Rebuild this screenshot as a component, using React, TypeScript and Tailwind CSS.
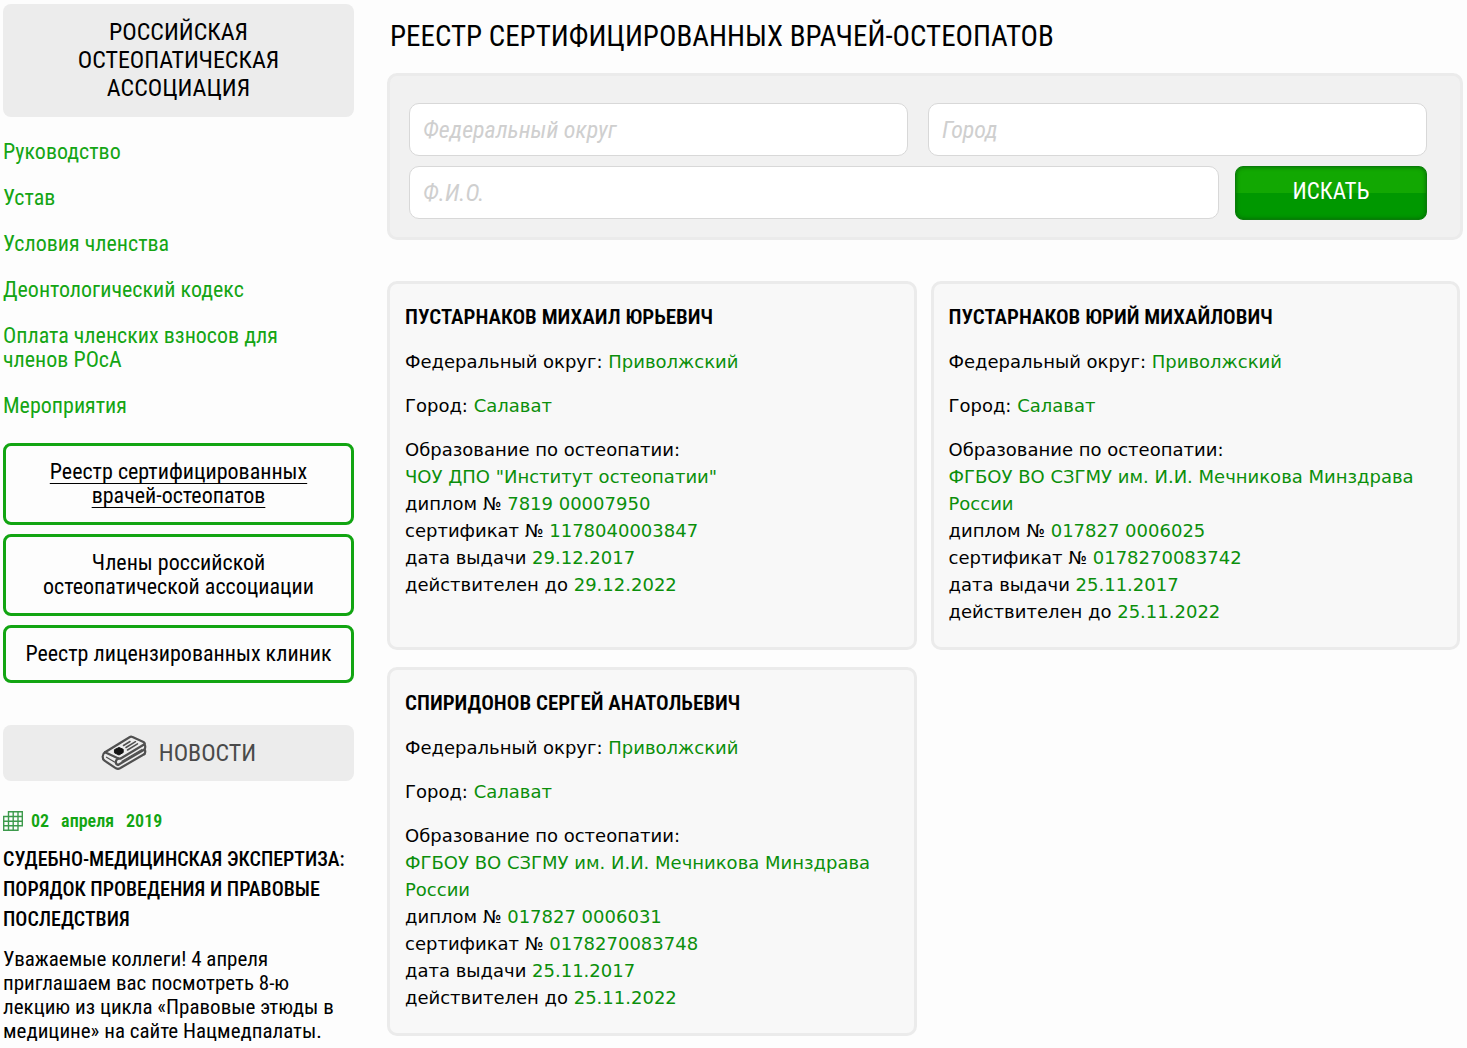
interface Doctor {
  name: string;
  district: string;
  city: string;
  school: string;
  diploma: string;
  certificate: string;
  issued: string;
  validUntil: string;
}

const menuLinks = [
  'Руководство',
  'Устав',
  'Условия членства',
  'Деонтологический кодекс',
  'Оплата членских взносов для членов РОсА',
  'Мероприятия',
];

const registryLinks = [
  { label: 'Реестр сертифицированных врачей-остеопатов', active: true },
  { label: 'Члены российской остеопатической ассоциации', active: false },
  { label: 'Реестр лицензированных клиник', active: false },
];

const doctors: Doctor[] = [
  {
    name: 'Пустарнаков Михаил Юрьевич',
    district: 'Приволжский',
    city: 'Салават',
    school: 'ЧОУ ДПО "Институт остеопатии"',
    diploma: '7819 00007950',
    certificate: '1178040003847',
    issued: '29.12.2017',
    validUntil: '29.12.2022',
  },
  {
    name: 'Пустарнаков Юрий Михайлович',
    district: 'Приволжский',
    city: 'Салават',
    school: 'ФГБОУ ВО СЗГМУ им. И.И. Мечникова Минздрава России',
    diploma: '017827 0006025',
    certificate: '0178270083742',
    issued: '25.11.2017',
    validUntil: '25.11.2022',
  },
  {
    name: 'Спиридонов Сергей Анатольевич',
    district: 'Приволжский',
    city: 'Салават',
    school: 'ФГБОУ ВО СЗГМУ им. И.И. Мечникова Минздрава России',
    diploma: '017827 0006031',
    certificate: '0178270083748',
    issued: '25.11.2017',
    validUntil: '25.11.2022',
  },
];

function NewspaperIcon() {
  return (
    <svg viewBox="0 0 46 36" className="h-9 w-[46px]" fill="none" stroke="#505050" strokeWidth="2.2" strokeLinejoin="round" strokeLinecap="round" aria-hidden="true">
      <path d="M17.500 23.500 4 17.200 28.500 2.200q1.500-.9 3-.1L43 7.300q1.500 1 0 2.200L20.500 23q-1.500 1-3 .5Z" />
      <path d="M4 17.200C1 19 1 24 3.500 25.700L15 33.300q2 1 4 0L43.500 19" />
      <path d="M17.500 23.500c-3.500 1.500-3.500 5.500-.5 6.500L43.500 14.500" />
      <path d="M43.500 9q1.500 2.800 0 5.500M43.500 14.500q1.500 2 0 4.500" />
      <path d="m5.500 22.200 8 4.800M21 26.300l20-11.800" strokeWidth="1.200" />
      <path d="M13.800 14.500 18 12.500l4.200 1.800v3.200L18 20l-4.200-2Z" fill="#151515" stroke="#151515" strokeWidth="1" />
      <path d="m22.500 10.500 6.500-4M25 12.500l9.500-5.800M26.500 15l10-6.200" strokeWidth="1.500" />
    </svg>
  );
}

function CalendarIcon() {
  return (
    <svg viewBox="0 0 20 20" className="h-5 w-5" fill="none" stroke="#3d9a4c" strokeWidth="1.400" aria-hidden="true">
      <path d="M5.500.7h13.800v14H15v4.600H.7V5.500h4.800V.7Z" />
      <path d="M10.200.7v18.600M15 .7v14M5.500 5.500v13.800M.7 10.200h18.600M5.500 5.500h13.800M.7 14.700H15" />
    </svg>
  );
}

function Value({ children }: { children: string }) {
  return <span className="text-[#0b8f0b]">{children}</span>;
}

function DoctorCard({ doctor }: { doctor: Doctor }) {
  return (
    <article className="flex flex-col gap-[17px] rounded-[10px] border-3 border-[#ebebeb] bg-[#f8f8f8] px-[15px] pt-5 pb-[22px] font-['DejaVu_Sans',sans-serif] text-lg leading-[27px]">
      <h2 className="font-['Roboto_Condensed',Roboto,sans-serif] text-[21px] leading-[27px] font-semibold uppercase">
        {doctor.name}
      </h2>
      <p>
        Федеральный округ: <Value>{doctor.district}</Value>
      </p>
      <p>
        Город: <Value>{doctor.city}</Value>
      </p>
      <p>
        Образование по остеопатии:
        <br />
        <Value>{doctor.school}</Value>
        <br />
        диплом № <Value>{doctor.diploma}</Value>
        <br />
        сертификат № <Value>{doctor.certificate}</Value>
        <br />
        дата выдачи <Value>{doctor.issued}</Value>
        <br />
        действителен до <Value>{doctor.validUntil}</Value>
      </p>
    </article>
  );
}

function SearchInput({ label, name }: { label: string; name: string }) {
  return (
    <input
      type="text"
      name={name}
      aria-label={label}
      placeholder={label}
      className="h-[53px] min-w-0 flex-1 rounded-[10px] border border-[#d8d8d8] bg-white px-[13px] text-2xl placeholder:text-[#cfcfcf] placeholder:italic"
    />
  );
}

function SearchForm() {
  return (
    <form
      className="flex flex-col gap-[10px] rounded-[10px] border-3 border-[#ebebeb] bg-[#f1f1f1] pt-[27px] pr-[33px] pb-[17px] pl-[19px]"
      onSubmit={(e) => e.preventDefault()}
    >
      <div className="flex gap-5">
        <SearchInput label="Федеральный округ" name="district" />
        <SearchInput label="Город" name="city" />
      </div>
      <div className="flex gap-4">
        <SearchInput label="Ф.И.О." name="fullName" />
        <button
          type="submit"
          className="h-[54px] w-48 rounded-lg border border-[#0a7d0a] bg-linear-to-b from-[#12a802] from-50% to-[#009800] to-50% pb-0.5 text-[23px] text-white uppercase shadow-[inset_0_0_4px_#066606]"
        >
          Искать
        </button>
      </div>
    </form>
  );
}

function Sidebar() {
  return (
    <aside className="w-[351px] shrink-0">
      <h2 className="rounded-lg bg-[#ececec] px-16 pt-[14px] pb-[15px] text-center text-2xl leading-7 uppercase">
        Российская остеопатическая ассоциация
      </h2>

      <nav className="mt-[23px]">
        <ul className="flex flex-col gap-[22px] text-[22px] leading-6 text-[#14a514]">
          {menuLinks.map((label) => (
            <li key={label} className="pr-14">
              <a href="#">{label}</a>
            </li>
          ))}
        </ul>
        <ul className="mt-[25px] flex flex-col gap-[9px] text-center text-[22px] leading-6">
          {registryLinks.map(({ label, active }) => (
            <li key={label}>
              <a
                href="#"
                className={`block rounded-lg border-3 border-[#12a512] px-3 py-[14px] ${active ? 'underline decoration-1 underline-offset-4' : ''}`}
              >
                {label}
              </a>
            </li>
          ))}
        </ul>
      </nav>

      <section>
        <h2 className="mt-[42px] flex h-14 items-center justify-center gap-3 rounded-lg bg-[#ececec] text-2xl text-[#4a4a4a] uppercase">
          <NewspaperIcon />
          Новости
        </h2>
        <article className="mt-7">
          <div className="flex items-center gap-2 text-lg leading-6 font-semibold text-[#12a512]">
            <CalendarIcon />
            <time dateTime="2019-04-02" className="flex gap-3">
              <span>02</span>
              <span>апреля</span>
              <span>2019</span>
            </time>
          </div>
          <h3 className="mt-[11px] text-xl leading-[30px] font-medium uppercase">
            Судебно-медицинская экспертиза: порядок проведения и правовые последствия
          </h3>
          <p className="mt-[13px] text-[21px] leading-6">
            Уважаемые коллеги! 4 апреля приглашаем вас посмотреть 8-ю лекцию из цикла «Правовые этюды в медицине» на
            сайте Нацмедпалаты.
          </p>
        </article>
      </section>
    </aside>
  );
}

export default function App() {
  return (
    <div className="flex min-h-screen gap-[33px] bg-[#fdfdfd] pt-1 pr-1 pl-[3px] font-['Roboto_Condensed',Roboto,sans-serif] text-black">
      <Sidebar />
      <main className="min-w-0 flex-1">
        <h1 className="mt-3 pl-[3px] text-[29px] leading-10 uppercase">
          Реестр сертифицированных врачей-остеопатов
        </h1>
        <div className="mt-[17px]">
          <SearchForm />
        </div>
        <div className="mt-[41px] grid grid-cols-2 gap-x-[14px] gap-y-[17px] pr-[3px]">
          {doctors.map((doctor) => (
            <DoctorCard key={doctor.name} doctor={doctor} />
          ))}
        </div>
      </main>
    </div>
  );
}
